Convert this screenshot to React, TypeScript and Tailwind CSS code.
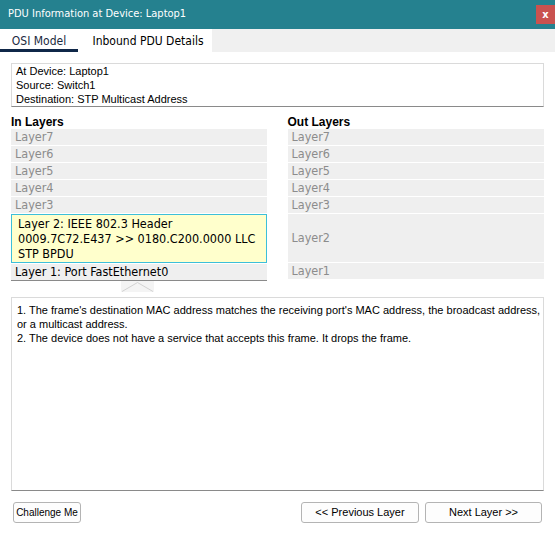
import React from 'react';

const tahoma = { fontFamily: '"DejaVu Sans Condensed", "DejaVu Sans", sans-serif' };
const arial = { fontFamily: '"Liberation Sans", Arial, sans-serif' };

const upper = ['Layer7', 'Layer6', 'Layer5', 'Layer4', 'Layer3'];

function LayerRow({ label, tall }: { label: string; tall?: boolean }) {
  return (
    <div
      className={`flex items-center bg-[#efefef] px-[4px] text-[12.5px] text-[#8c8c8c] ${tall ? 'h-[48px]' : 'h-[16px]'}`}
    >
      {label}
    </div>
  );
}

export default function App() {
  return (
    <div className="flex h-[548px] w-[555px] flex-col bg-white" style={tahoma}>
      {/* title bar */}
      <div className="flex h-[29px] shrink-0 items-center justify-between bg-[#25818f] pl-[8px]">
        <span className="text-[11px] text-white">PDU Information at Device: Laptop1</span>
        <button
          type="button"
          className="flex h-[19px] w-[19px] items-center justify-center bg-[#c9524f] text-[11px] font-bold leading-none text-white"
        >
          x
        </button>
      </div>

      {/* tabs */}
      <div className="flex h-[23px] shrink-0">
        <div className="flex w-[78px] items-center justify-center border-b-[3px] border-[#0f2748] pt-[3px] text-[12px] text-[#1a2a40]">
          OSI Model
        </div>
        <div className="flex w-[134px] items-center justify-center pl-[6px] text-[12px] text-black">
          Inbound PDU Details
        </div>
        <div className="flex-1 bg-[#f0f0f0]" />
      </div>

      <div className="flex flex-1 flex-col px-[11px]">
        <div
          className="mt-[11px] flex h-[44px] flex-col justify-center border border-[#dadada] border-b-[#8a8a8a] pl-[4px] text-[11px] leading-[14px] text-black"
          style={arial}
        >
          <div>At Device: Laptop1</div>
          <div>Source: Switch1</div>
          <div>Destination: STP Multicast Address</div>
        </div>

        <div className="mt-[9px] flex gap-[21px]">
          <div className="flex w-[256px] flex-col">
            <div className="text-[12px] font-bold leading-[13px] text-black" style={arial}>
              In Layers
            </div>
            <div className="flex flex-col gap-[1px]">
              {upper.map((l) => (
                <LayerRow key={l} label={l} />
              ))}
              <div className="flex h-[49px] flex-col justify-center border border-[#3dbfd9] bg-[#ffffcc] px-[6px] text-[12.5px] leading-[15px] text-black">
                <div>Layer 2: IEEE 802.3 Header</div>
                <div>0009.7C72.E437 &gt;&gt; 0180.C200.0000 LLC</div>
                <div>STP BPDU</div>
              </div>
              <div className="flex h-[17px] items-center border-b border-[#8a8a8a] bg-[#efefef] px-[4px] text-[12.5px] text-black">
                Layer 1: Port FastEthernet0
              </div>
            </div>
            <div className="flex justify-center pr-[3px]">
              <svg width="33" height="11" viewBox="0 0 33 11">
                <rect x="0" y="0" width="33" height="11" fill="#f4f4f4" />
                <polyline points="1,10.5 16.5,1.5 32,10.5" fill="none" stroke="#d2d2d2" strokeWidth="1" />
              </svg>
            </div>
          </div>

          <div className="flex w-[257px] flex-col">
            <div className="text-[12px] font-bold leading-[13px] text-black" style={arial}>
              Out Layers
            </div>
            <div className="flex flex-col gap-[1px]">
              {upper.map((l) => (
                <LayerRow key={l} label={l} />
              ))}
              <LayerRow label="Layer2" tall />
              <LayerRow label="Layer1" />
            </div>
          </div>
        </div>

        <div
          className="mt-[5px] h-[194px] border border-[#dadada] border-b-[#8a8a8a] pl-[5px] pt-[5px] text-[11px] leading-[14px] text-black"
          style={arial}
        >
          <div>
            1. The frame's destination MAC address matches the receiving port's MAC address, the broadcast address,
            or a multicast address.
          </div>
          <div>2. The device does not have a service that accepts this frame. It drops the frame.</div>
        </div>

        <div className="mt-[11px] flex items-center justify-between text-[11px] text-black" style={arial}>
          <button
            type="button"
            className="ml-[2px] h-[21px] w-[68px] whitespace-nowrap rounded-[3px] border border-[#b4b4b4] bg-[#fdfdfd] px-0 text-[10px]"
          >
            Challenge Me
          </button>
          <div className="flex gap-[6px]">
            <button type="button" className="h-[21px] w-[118px] rounded-[3px] border border-[#b4b4b4] bg-[#fdfdfd]">
              &lt;&lt; Previous Layer
            </button>
            <button
              type="button"
              className="mr-[2px] h-[21px] w-[117px] rounded-[3px] border border-[#b4b4b4] bg-[#fdfdfd]"
            >
              Next Layer &gt;&gt;
            </button>
          </div>
        </div>
      </div>
    </div>
  );
}
